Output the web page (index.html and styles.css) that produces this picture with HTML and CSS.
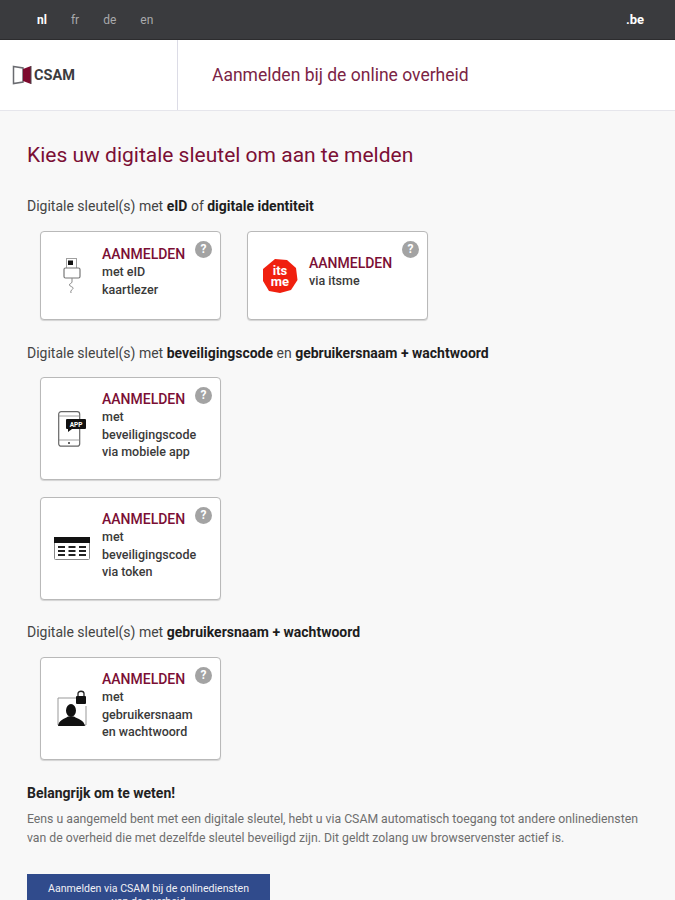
FILE: index.html
```html
<!DOCTYPE html>
<html lang="nl">
<head>
<meta charset="utf-8">
<title>CSAM</title>
<link rel="stylesheet" href="styles.css">
</head>
<body>
<div class="page">
  <nav class="topbar">
    <ul class="langs">
      <li class="lang active">nl</li>
      <li class="lang">fr</li>
      <li class="lang">de</li>
      <li class="lang">en</li>
    </ul>
    <span class="be">.be</span>
  </nav>
  <header class="brandbar">
    <div class="logo">
      <svg class="logo-mark" width="20" height="20" viewBox="0 0 20 20">
        <path d="M1.500 1.500 L11 3 V17 L1.500 18.500 Z" fill="#fff" stroke="#6a6b70" stroke-width="1.500"/>
        <path d="M11 4 L19 1 V19 L11 16 Z" fill="#7d0a2e"/>
        <path d="M19 1 V19" stroke="#4a4a4e" stroke-width="1"/>
      </svg>
      <span class="logo-text">CSAM</span>
    </div>
    <div class="brand-title">Aanmelden bij de online overheid</div>
  </header>
  <main class="content">
    <h1 class="heading">Kies uw digitale sleutel om aan te melden</h1>

    <p class="group-label">Digitale sleutel(s) met <b>eID</b> of <b>digitale identiteit</b></p>
    <div class="card-row">
      <a class="card card-short">
        <span class="help">?</span>
        <span class="card-icon">
          <svg width="18" height="36" viewBox="0 0 18 36">
            <rect x="3.500" y="0.500" width="10" height="10" fill="#fff" stroke="#a0a0a0"/>
            <rect x="5" y="2.500" width="5" height="4.500" fill="#111"/>
            <rect x="1" y="10" width="16" height="10" rx="1.500" fill="#fff" stroke="#777" stroke-width="1.200"/>
            <path d="M9 20 V24 C9 25.500 6 25.500 6.500 27 C7 29 10.500 28.500 10 30.500 C9.500 32 7 32 8 35" fill="none" stroke="#888" stroke-width="1"/>
          </svg>
        </span>
        <span class="card-text">
          <strong class="card-action">AANMELDEN</strong>
          <span class="card-line">met eID</span>
          <span class="card-line">kaartlezer</span>
        </span>
      </a>
      <a class="card card-short card-itsme">
        <span class="help">?</span>
        <span class="card-icon">
          <svg class="itsme" width="36" height="36" viewBox="0 0 36 36">
            <path d="M13 1 L25 2 L34 10 L35.500 22 L29 32 L18 35 L7 33 L1 23 L1 11 Z" fill="#f0200f"/>
            <text x="18" y="17" class="itsme-text">its</text>
            <text x="18" y="28" class="itsme-text">me</text>
          </svg>
        </span>
        <span class="card-text">
          <strong class="card-action">AANMELDEN</strong>
          <span class="card-line">via itsme</span>
        </span>
      </a>
    </div>

    <p class="group-label">Digitale sleutel(s) met <b>beveiligingscode</b> en <b>gebruikersnaam + wachtwoord</b></p>
    <div class="card-stack">
      <a class="card">
        <span class="help">?</span>
        <span class="card-icon">
          <svg width="28" height="36" viewBox="0 0 28 36">
            <rect x="0.700" y="0.700" width="21" height="34.500" rx="2.500" fill="#fff" stroke="#666" stroke-width="1.200"/>
            <path d="M1 5 H22 M1 29 H22" stroke="#888" stroke-width="0.800"/>
            <rect x="8" y="8" width="20" height="10" rx="1" fill="#111"/>
            <path d="M10 18 V21 L14 18 Z" fill="#111"/>
            <text x="18" y="16" class="app-text">APP</text>
            <circle cx="11" cy="32" r="1" fill="#333"/>
          </svg>
        </span>
        <span class="card-text">
          <strong class="card-action">AANMELDEN</strong>
          <span class="card-line">met</span>
          <span class="card-line">beveiligingscode</span>
          <span class="card-line">via mobiele app</span>
        </span>
      </a>
      <a class="card">
        <span class="help">?</span>
        <span class="card-icon">
          <svg width="36" height="23" viewBox="0 0 36 23">
            <rect x="0.500" y="0.500" width="35" height="22" rx="1" fill="#fff" stroke="#888"/>
            <rect x="0" y="0" width="36" height="6" fill="#111"/>
            <path d="M4 10 H11 M4 14 H11 M4 18 H11 M14.500 10 H21.500 M14.500 14 H21.500 M14.500 18 H21.500 M25 10 H32 M25 14 H32 M25 18 H32" stroke="#222" stroke-width="1.800"/>
          </svg>
        </span>
        <span class="card-text">
          <strong class="card-action">AANMELDEN</strong>
          <span class="card-line">met</span>
          <span class="card-line">beveiligingscode</span>
          <span class="card-line">via token</span>
        </span>
      </a>
    </div>

    <p class="group-label">Digitale sleutel(s) met <b>gebruikersnaam + wachtwoord</b></p>
    <div class="card-stack card-stack-last">
      <a class="card">
        <span class="help">?</span>
        <span class="card-icon">
          <svg width="30" height="37" viewBox="0 0 30 37">
            <path d="M20 8 H1 V35 H29 V16" fill="#fff" stroke="#999" stroke-width="1"/>
            <path d="M21 6 V3.500 C21 0.500 27 0.500 27 3.500 V6" fill="none" stroke="#222" stroke-width="1.300"/>
            <rect x="19" y="6" width="10" height="8" rx="1" fill="#111"/>
            <ellipse cx="14" cy="20.500" rx="5" ry="6.500" fill="#111"/>
            <path d="M1 36 C2 30 7 29 11 26.500 H17 C21 29 27 30 28 36 Z" fill="#111"/>
          </svg>
        </span>
        <span class="card-text">
          <strong class="card-action">AANMELDEN</strong>
          <span class="card-line">met</span>
          <span class="card-line">gebruikersnaam</span>
          <span class="card-line">en wachtwoord</span>
        </span>
      </a>
    </div>

    <h2 class="note-title">Belangrijk om te weten!</h2>
    <p class="note-text">Eens u aangemeld bent met een digitale sleutel, hebt u via CSAM automatisch toegang tot andere onlinediensten van de overheid die met dezelfde sleutel beveiligd zijn. Dit geldt zolang uw browservenster actief is.</p>
    <a class="cta">Aanmelden via CSAM bij de onlinediensten van de overheid</a>
  </main>
</div>
</body>
</html>
```

FILE: styles.css
```css
* { box-sizing: border-box; }
html, body { margin: 0; height: 900px; overflow: hidden; }
body { font-family: Roboto, "Liberation Sans", sans-serif; background: #f8f8f8; color: #222; }
.page { display: flex; flex-direction: column; }

.topbar { height: 40px; background: #3a3b3e; border-bottom: 1px solid #2c2c2e; display: flex; align-items: center; justify-content: space-between; padding: 0 31px 0 37px; }
.langs { display: flex; gap: 24px; list-style: none; margin: 0; padding: 0; }
.lang { font-size: 12px; color: #a9aaac; }
.lang.active { color: #fff; font-weight: 700; }
.be { color: #fff; font-size: 13px; font-weight: 700; }

.brandbar { height: 71px; background: #fff; display: flex; border-bottom: 1px solid #e6e6ec; }
.logo { width: 178px; border-right: 1px solid #dcdce6; display: flex; align-items: center; gap: 2px; padding-left: 12px; }
.logo-text { font-size: 14.500px; font-weight: 700; color: #3c3c3e; }
.brand-title { padding: 0 0 1px 34px; display: flex; align-items: center; color: #7b2445; font-size: 17.500px; }

.content { padding: 31px 27px 0; }
.heading { margin: 0; font-size: 21px; line-height: 26px; font-weight: 400; color: #7b0f35; }
.group-label { margin: 0; font-size: 14px; line-height: 18px; color: #444; }
.group-label b { color: #1d1d1d; font-weight: 700; }
.heading + .group-label { margin-top: 29px; }

.card-row { display: flex; gap: 26px; padding: 16px 0 0 13px; }
.card-stack { display: flex; flex-direction: column; gap: 17px; padding: 15px 0 0 13px; }
.card-stack-last { padding-top: 16px; }
.card-row + .group-label { margin-top: 24px; }
.card-stack + .group-label { margin-top: 23px; }

.card { position: relative; display: flex; width: 181px; height: 103px; background: #fff; border: 1px solid #b9b9b9; border-radius: 4px; box-shadow: 0 1px 1px rgba(0,0,0,.15); }
.card-short { height: 89px; }
.help { position: absolute; top: 9px; right: 8px; width: 17px; height: 17px; border-radius: 50%; background: #a3a3a3; color: #fff; font-size: 12px; font-weight: 700; line-height: 17px; text-align: center; }
.card-icon { width: 61px; flex: none; display: flex; align-items: center; justify-content: center; }
.card-text { display: flex; flex-direction: column; padding-top: 12px; }
.card-short .card-text { padding-top: 13px; }
.card-short.card-itsme .card-text { padding-top: 22px; }
.card-action { font-size: 14px; line-height: 18px; font-weight: 500; color: #7b0f35; }
.card-line { font-size: 12.500px; line-height: 17.500px; font-weight: 500; color: #3a3a3a; }

.itsme { margin-left: 2px; }
.itsme-text { font: 700 13px Roboto, sans-serif; fill: #fff; text-anchor: middle; }
.app-text { font: 700 6.500px Roboto, sans-serif; fill: #fff; text-anchor: middle; }

.note-title { margin: 24px 0 0; font-size: 14px; line-height: 18px; font-weight: 700; color: #222; }
.note-text { margin: 8px 0 0; font-size: 12.250px; line-height: 19px; color: #6e6e6e; }
.cta { display: block; margin-top: 26px; width: 243px; background: #304b8c; color: #f0f0f5; font-size: 10.600px; line-height: 13px; text-align: center; padding: 8px 20px 7px; }
```
